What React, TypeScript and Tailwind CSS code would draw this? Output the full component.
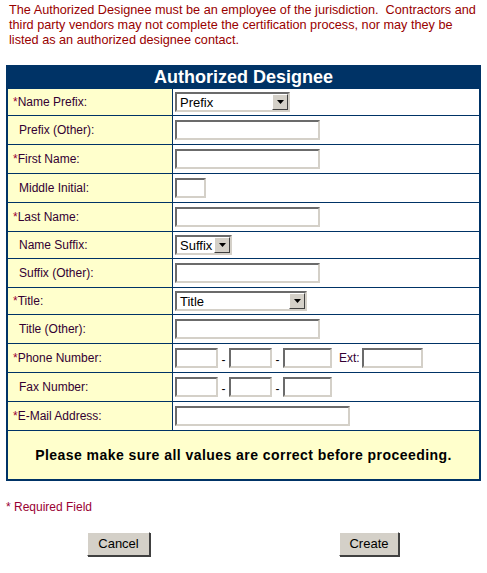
import React from 'react';

const inset =
  'bg-white border-2 border-t-[#6b6b6b] border-l-[#6b6b6b] border-r-[#d4d0c8] border-b-[#d4d0c8]';

const TextBox = ({ w }: { w: string }) => <div className={`${inset} h-[20px] ${w}`} />;

const SelectBox = ({ w, label }: { w: string; label: string }) => (
  <div className={`${inset} h-[20px] ${w} flex items-center justify-between`}>
    <span className="pl-[3px] text-[13px] leading-none text-black">{label}</span>
    <div className="w-[16px] h-[16px] bg-[#d4d0c8] border border-t-white border-l-white border-r-[#404040] border-b-[#404040] flex items-center justify-center">
      <svg width="7" height="4" viewBox="0 0 7 4">
        <path d="M0 0h7L3.5 4z" fill="#000" />
      </svg>
    </div>
  </div>
);

type Row = { label: string; req?: boolean; h: string; field: React.ReactNode };

const Dash = () => <span className="w-[11px] text-center text-[12px] text-black pt-[4px]">-</span>;

const rows: Row[] = [
  { label: 'Name Prefix:', req: true, h: 'h-[27px]', field: <SelectBox w="w-[115px]" label="Prefix" /> },
  { label: 'Prefix (Other):', h: 'h-[29px]', field: <TextBox w="w-[145px]" /> },
  { label: 'First Name:', req: true, h: 'h-[29px]', field: <TextBox w="w-[145px]" /> },
  { label: 'Middle Initial:', h: 'h-[29px]', field: <TextBox w="w-[31px]" /> },
  { label: 'Last Name:', req: true, h: 'h-[29px]', field: <TextBox w="w-[145px]" /> },
  { label: 'Name Suffix:', h: 'h-[27px]', field: <SelectBox w="w-[57px]" label="Suffix" /> },
  { label: 'Suffix (Other):', h: 'h-[29px]', field: <TextBox w="w-[145px]" /> },
  { label: 'Title:', req: true, h: 'h-[27px]', field: <SelectBox w="w-[132px]" label="Title" /> },
  { label: 'Title (Other):', h: 'h-[29px]', field: <TextBox w="w-[145px]" /> },
  {
    label: 'Phone Number:',
    req: true,
    h: 'h-[29px]',
    field: (
      <div className="flex items-center">
        <TextBox w="w-[43px]" />
        <Dash />
        <TextBox w="w-[43px]" />
        <Dash />
        <TextBox w="w-[49px]" />
        <span className="ml-[7px] w-[23px] text-[12px] text-[#330033]">Ext:</span>
        <TextBox w="w-[61px]" />
      </div>
    ),
  },
  {
    label: 'Fax Number:',
    h: 'h-[29px]',
    field: (
      <div className="flex items-center">
        <TextBox w="w-[43px]" />
        <Dash />
        <TextBox w="w-[43px]" />
        <Dash />
        <TextBox w="w-[49px]" />
      </div>
    ),
  },
  { label: 'E-Mail Address:', req: true, h: 'h-[29px]', field: <TextBox w="w-[175px]" /> },
];

const Btn = ({ children, w }: { children: React.ReactNode; w: string }) => (
  <button className={`${w} h-[24px] bg-[#d4d0c8] border border-t-white border-l-white border-r-[#404040] border-b-[#404040] shadow-[1px_1px_0_#404040] text-[13px] text-black`}>
    {children}
  </button>
);

export default function App() {
  return (
    <div className="w-[487px] h-[573px] bg-white font-['Liberation_Sans',Arial,sans-serif] text-[12px] overflow-hidden">
      <p className="ml-[9px] w-[470px] pt-[3px] leading-[15px] text-[#990000] text-[12.7px]">
        The Authorized Designee must be an employee of the jurisdiction.&nbsp; Contractors and third party vendors may not
        complete the certification process, nor may they be listed as an authorized designee contact.
      </p>

      <div className="ml-[6px] mt-[17px] w-[475px] border-2 border-[#003366]">
        <div className="h-[21px] bg-[#003366] text-white font-bold text-[18px] leading-[21px] text-center">
          Authorized Designee
        </div>
        {rows.map((r) => (
          <div key={r.label} className={`flex border-t border-[#003366] ${r.h}`}>
            <div
              className={`w-[165px] bg-[#ffffcc] border-r border-[#003366] flex items-center text-[#330033] ${
                r.req ? 'pl-[5px]' : 'pl-[11px]'
              }`}
            >
              {r.req && <span className="text-[#990033]">*</span>}
              {r.label}
            </div>
            <div className="flex-1 flex items-center pl-[2px]">{r.field}</div>
          </div>
        ))}
        <div className="h-[49px] border-t border-[#003366] bg-[#ffffcc] flex items-center justify-center font-bold text-[14px] tracking-[0.45px] text-black">
          Please make sure all values are correct before proceeding.
        </div>
      </div>

      <div className="pl-[6px] mt-[17px] text-[#990033] text-[12px]">* Required Field</div>

      <div className="flex mt-[16px] pl-[87px]">
        <Btn w="w-[63px]">Cancel</Btn>
        <div className="w-[189px]" />
        <Btn w="w-[60px]">Create</Btn>
      </div>
    </div>
  );
}
